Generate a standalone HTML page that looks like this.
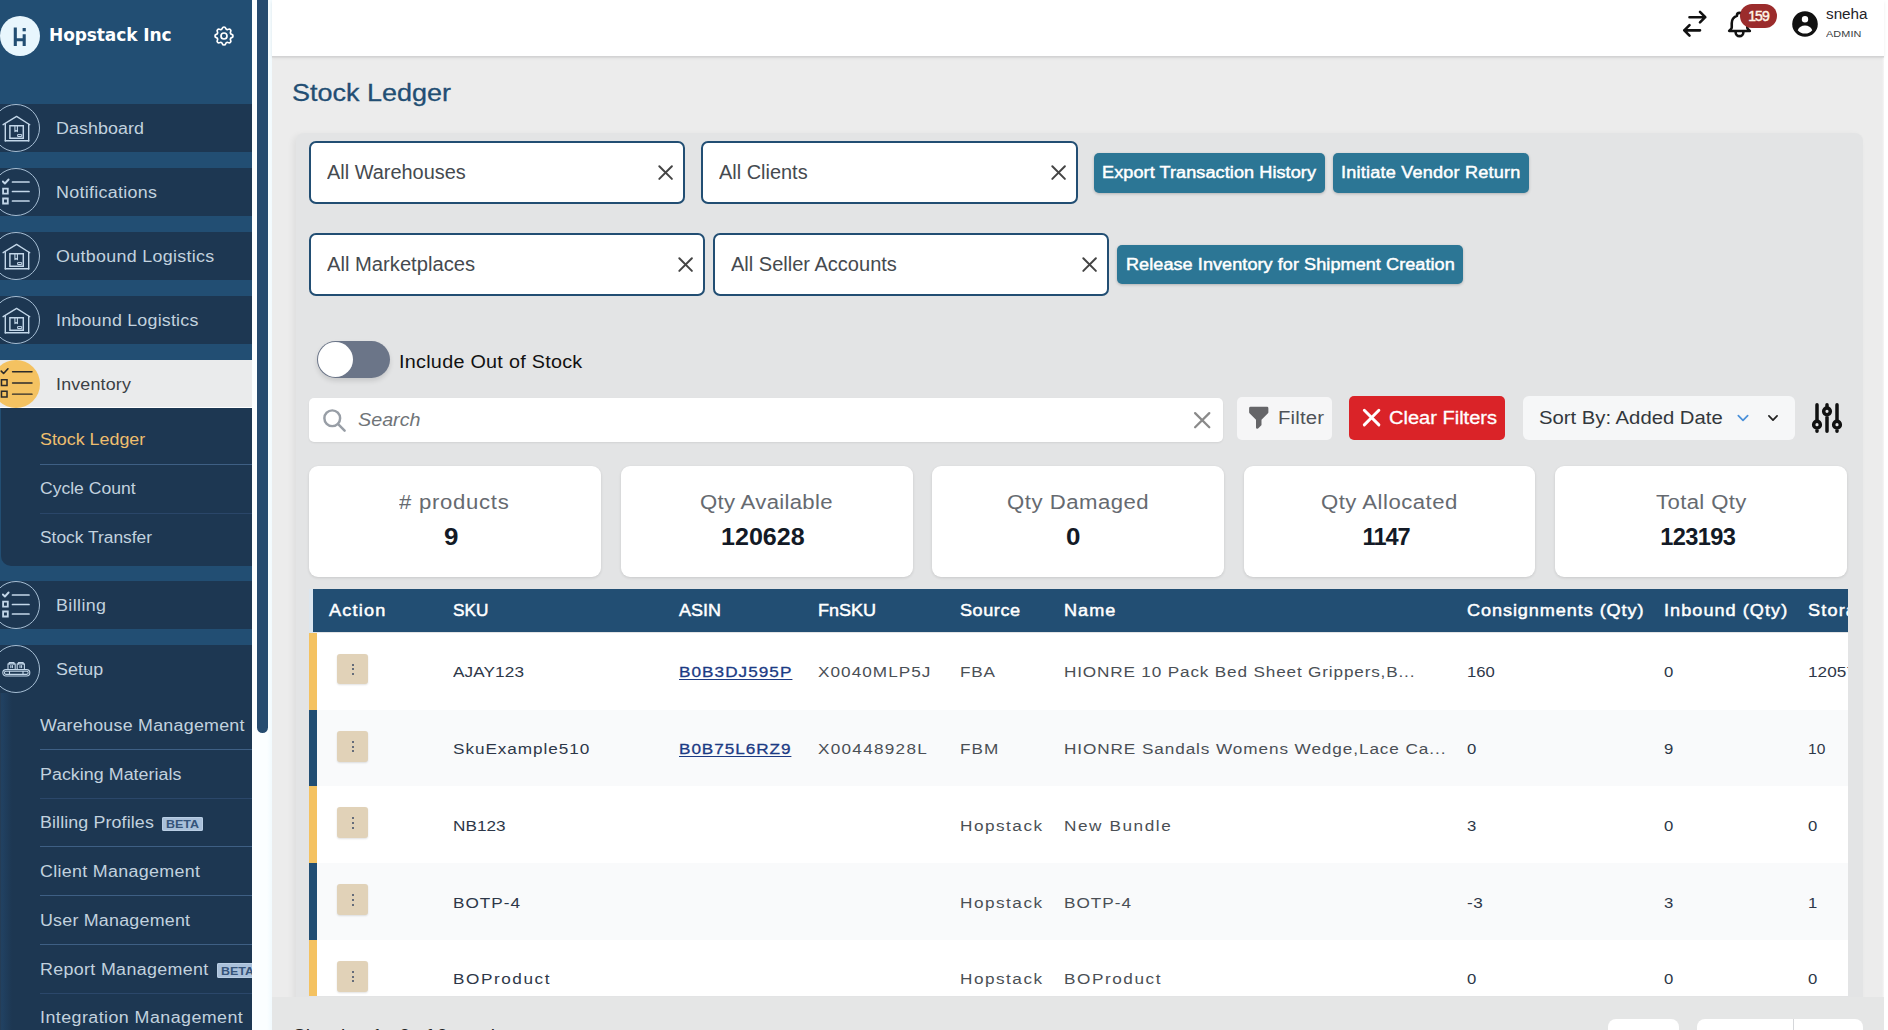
<!DOCTYPE html>
<html lang="en"><head><meta charset="utf-8"><title>Stock Ledger</title>
<style>
html,body{margin:0;padding:0;}
body{width:1888px;height:1030px;overflow:hidden;position:relative;background:#ECECED;font-family:'Liberation Sans', sans-serif;}
div,svg,nav,.t{position:absolute;}
.t{white-space:pre;display:block;transform-origin:0 50%;}
</style></head><body>
<nav style="left:0px;top:0px;width:252px;height:1030px;overflow:hidden;">
<div style="left:0px;top:0px;width:252px;height:1030px;background:#224E73;"></div>
<div style="left:0px;top:16px;width:40px;height:40px;background:#E8F6FD;border-radius:50%;"></div>
<svg style="left:13px;top:26.5px;" width="14" height="19.5" viewBox="0 0 14 19.5"><g fill="none" stroke="#224E73" stroke-width="3.1"><path d="M2.3 0.5V19M11.2 7.2V19M2.3 12.8H11.2"/></g><rect x="9.6" y="1" width="3.2" height="3.3" fill="#224E73"/></svg>
<span class="t" style="left:49.0px;top:27.2px;font-size:17px;line-height:17px;color:#fff;font-weight:700;font-family:'DejaVu Sans', 'Liberation Sans', sans-serif;letter-spacing:-0.10px;">Hopstack Inc</span>
<svg style="left:212px;top:24px;" width="24" height="24" viewBox="0 0 24 24"><g fill="none" stroke="#fff" stroke-width="1.7" stroke-linecap="round" stroke-linejoin="round"><path d="M10.325 4.317c.426-1.756 2.924-1.756 3.35 0a1.724 1.724 0 002.573 1.066c1.543-.94 3.31.826 2.37 2.37a1.724 1.724 0 001.065 2.572c1.756.426 1.756 2.924 0 3.35a1.724 1.724 0 00-1.066 2.573c.94 1.543-.826 3.31-2.37 2.37a1.724 1.724 0 00-2.572 1.065c-.426 1.756-2.924 1.756-3.35 0a1.724 1.724 0 00-2.573-1.066c-1.543.94-3.31-.826-2.37-2.37a1.724 1.724 0 00-1.065-2.572c-1.756-.426-1.756-2.924 0-3.35a1.724 1.724 0 001.066-2.573c-.94-1.543.826-3.31 2.37-2.37.996.608 2.296.07 2.572-1.065z"/><path d="M15 12a3 3 0 11-6 0 3 3 0 016 0z"/></g></svg>
<div style="left:0px;top:104px;width:252px;height:48px;background:#1D3752;"></div>
<div style="left:-8px;top:104px;width:48px;height:48px;border:1px solid #A6BED4;border-radius:50%;box-sizing:border-box;background:#1D3752;"></div>
<svg style="left:0px;top:114px;" width="33" height="30" viewBox="0 0 33 30"><g fill="none" stroke="#C3D7E9" stroke-linejoin="round" stroke-linecap="round"><path stroke-width="1.35" d="M3.1 10.7L16.6 2.4L29.8 10.7"/><path stroke-width="1.4" d="M5.3 10.2V27M28.7 10.2V27"/><path stroke-width="1.5" d="M5.3 26.7H28.7"/><path stroke-width="1.45" stroke-linejoin="miter" d="M9.9 11.8h13.4v12.5H9.9z"/><path stroke-width="1.1" d="M14.9 12.2v5.4l1.25-1 1.25 1v-5.4"/><path stroke-width="1" d="M18 20.6h3.7v1.9H18z"/></g></svg>
<span class="t" style="left:56.3px;top:120.6px;font-size:15.8px;line-height:15.8px;color:#C2D2DF;letter-spacing:0.07px;transform:scaleX(1.130);">Dashboard</span>
<div style="left:0px;top:168px;width:252px;height:48px;background:#1D3752;"></div>
<div style="left:-8px;top:168px;width:48px;height:48px;border:1px solid #A6BED4;border-radius:50%;box-sizing:border-box;background:#1D3752;"></div>
<svg style="left:1.4px;top:178.0px;" width="29" height="27" viewBox="0 0 29 27"><g fill="none" stroke="#C3D7E9" stroke-linecap="round" stroke-linejoin="round"><path stroke-width="1.90" d="M1.9 3.5l2 2 3.7-4"/><path stroke-width="1.80" stroke-linejoin="miter" d="M2.1 10.7h4.7v5h-4.7zM2.1 20.5h4.7v5h-4.7z"/><path stroke-width="1.70" d="M11.5 4h16.5M11.5 13.5h16.5M11.5 23h16.5"/></g></svg>
<span class="t" style="left:56.3px;top:184.6px;font-size:15.8px;line-height:15.8px;color:#C2D2DF;letter-spacing:0.28px;transform:scaleX(1.130);">Notifications</span>
<div style="left:0px;top:232px;width:252px;height:48px;background:#1D3752;"></div>
<div style="left:-8px;top:232px;width:48px;height:48px;border:1px solid #A6BED4;border-radius:50%;box-sizing:border-box;background:#1D3752;"></div>
<svg style="left:0px;top:242px;" width="33" height="30" viewBox="0 0 33 30"><g fill="none" stroke="#C3D7E9" stroke-linejoin="round" stroke-linecap="round"><path stroke-width="1.35" d="M3.1 10.7L16.6 2.4L29.8 10.7"/><path stroke-width="1.4" d="M5.3 10.2V27M28.7 10.2V27"/><path stroke-width="1.5" d="M5.3 26.7H28.7"/><path stroke-width="1.45" stroke-linejoin="miter" d="M9.9 11.8h13.4v12.5H9.9z"/><path stroke-width="1.1" d="M14.9 12.2v5.4l1.25-1 1.25 1v-5.4"/><path stroke-width="1" d="M18 20.6h3.7v1.9H18z"/></g></svg>
<span class="t" style="left:56.3px;top:248.6px;font-size:15.8px;line-height:15.8px;color:#C2D2DF;letter-spacing:0.28px;transform:scaleX(1.130);">Outbound Logistics</span>
<div style="left:0px;top:296px;width:252px;height:48px;background:#1D3752;"></div>
<div style="left:-8px;top:296px;width:48px;height:48px;border:1px solid #A6BED4;border-radius:50%;box-sizing:border-box;background:#1D3752;"></div>
<svg style="left:0px;top:306px;" width="33" height="30" viewBox="0 0 33 30"><g fill="none" stroke="#C3D7E9" stroke-linejoin="round" stroke-linecap="round"><path stroke-width="1.35" d="M3.1 10.7L16.6 2.4L29.8 10.7"/><path stroke-width="1.4" d="M5.3 10.2V27M28.7 10.2V27"/><path stroke-width="1.5" d="M5.3 26.7H28.7"/><path stroke-width="1.45" stroke-linejoin="miter" d="M9.9 11.8h13.4v12.5H9.9z"/><path stroke-width="1.1" d="M14.9 12.2v5.4l1.25-1 1.25 1v-5.4"/><path stroke-width="1" d="M18 20.6h3.7v1.9H18z"/></g></svg>
<span class="t" style="left:56.3px;top:312.6px;font-size:15.8px;line-height:15.8px;color:#C2D2DF;letter-spacing:0.19px;transform:scaleX(1.130);">Inbound Logistics</span>
<div style="left:0px;top:360px;width:252px;height:48px;background:#EAEBEC;box-shadow:inset 0 -1px 0 #fff;"></div>
<div style="left:-8px;top:360px;width:48px;height:48px;background:#F4C261;border-radius:50%;"></div>
<svg style="left:-1.4px;top:366.9px;" width="34.2" height="31.9" viewBox="0 0 29 27"><g fill="none" stroke="#2b2b2b" stroke-linecap="round" stroke-linejoin="round"><path stroke-width="1.37" d="M1.9 3.5l2 2 3.7-4"/><path stroke-width="1.30" stroke-linejoin="miter" d="M2.1 10.7h4.7v5h-4.7zM2.1 20.5h4.7v5h-4.7z"/><path stroke-width="1.22" d="M11.5 4h16.5M11.5 13.5h16.5M11.5 23h16.5"/></g></svg>
<span class="t" style="left:56.3px;top:376.6px;font-size:15.8px;line-height:15.8px;color:#3b3f45;letter-spacing:0.16px;transform:scaleX(1.130);">Inventory</span>
<div style="left:1px;top:408px;width:251px;height:157.5px;background:#1D3752;border-bottom-left-radius:10px;"></div>
<span class="t" style="left:40.2px;top:432.3px;font-size:15.8px;line-height:15.8px;color:#EDBE6E;transform:scaleX(1.130);">Stock Ledger</span>
<div style="left:40px;top:464px;width:212px;height:1px;background:#3E5F84;"></div>
<span class="t" style="left:40.2px;top:480.9px;font-size:15.8px;line-height:15.8px;color:#C2D2DF;transform:scaleX(1.111);">Cycle Count</span>
<div style="left:40px;top:513px;width:212px;height:1px;background:#2A4669;"></div>
<span class="t" style="left:40.2px;top:529.6px;font-size:15.8px;line-height:15.8px;color:#C2D2DF;transform:scaleX(1.100);">Stock Transfer</span>
<div style="left:0px;top:581px;width:252px;height:48px;background:#1D3752;"></div>
<div style="left:-8px;top:581px;width:48px;height:48px;border:1px solid #A6BED4;border-radius:50%;box-sizing:border-box;background:#1D3752;"></div>
<svg style="left:1.4px;top:591.0px;" width="29" height="27" viewBox="0 0 29 27"><g fill="none" stroke="#C3D7E9" stroke-linecap="round" stroke-linejoin="round"><path stroke-width="1.90" d="M1.9 3.5l2 2 3.7-4"/><path stroke-width="1.80" stroke-linejoin="miter" d="M2.1 10.7h4.7v5h-4.7zM2.1 20.5h4.7v5h-4.7z"/><path stroke-width="1.70" d="M11.5 4h16.5M11.5 13.5h16.5M11.5 23h16.5"/></g></svg>
<span class="t" style="left:56.3px;top:597.6px;font-size:15.8px;line-height:15.8px;color:#C2D2DF;letter-spacing:0.35px;transform:scaleX(1.130);">Billing</span>
<div style="left:0px;top:645px;width:252px;height:400px;background:#1D3752;"></div>
<div style="left:-8px;top:645px;width:48px;height:48px;border:1px solid #A6BED4;border-radius:50%;box-sizing:border-box;background:#1D3752;"></div>
<svg style="left:1.5px;top:660.4px;" width="29" height="17" viewBox="0 0 29 17"><g fill="none" stroke="#C3D7E9" stroke-width="1.1" stroke-linejoin="round" stroke-linecap="round"><rect x="0.8" y="9.6" width="27" height="6.4" rx="3.2"/><rect x="2.4" y="11.2" width="23.8" height="3.2" rx="1.6"/><path d="M7.5 11.2v3.2M21 11.2v3.2"/><path d="M6 9.4V3.9h7.2v5.5M15.2 9.4V3.9h7.2v5.5"/><path d="M7.2 3.9V2.6h4.8V3.9M16.4 3.9V2.6h4.8V3.9"/><path d="M8.8 5.6v2M10.4 5.6v2M18 5.6v2M19.6 5.6v2"/></g></svg>
<span class="t" style="left:56.3px;top:661.6px;font-size:15.8px;line-height:15.8px;color:#C2D2DF;letter-spacing:0.11px;transform:scaleX(1.130);">Setup</span>
<div style="left:0px;top:693px;width:12px;height:340px;background:linear-gradient(90deg,rgba(40,60,82,.9) 0,rgba(36,74,112,.55) 14%,rgba(36,74,112,0) 100%);"></div>
<span class="t" style="left:40.3px;top:717.9px;font-size:15.8px;line-height:15.8px;color:#C2D2DF;letter-spacing:0.22px;transform:scaleX(1.130);">Warehouse Management</span>
<div style="left:40px;top:749.0px;width:212px;height:1px;background:#3E5F84;"></div>
<span class="t" style="left:40.3px;top:766.6px;font-size:15.8px;line-height:15.8px;color:#C2D2DF;letter-spacing:0.03px;transform:scaleX(1.130);">Packing Materials</span>
<div style="left:40px;top:797.73px;width:212px;height:1px;background:#2B476A;"></div>
<span class="t" style="left:40.3px;top:815.3px;font-size:15.8px;line-height:15.8px;color:#C2D2DF;letter-spacing:0.10px;transform:scaleX(1.130);">Billing Profiles</span>
<div style="left:40px;top:846.46px;width:212px;height:1px;background:#3E5F84;"></div>
<span class="t" style="left:40.3px;top:864.1px;font-size:15.8px;line-height:15.8px;color:#C2D2DF;letter-spacing:0.28px;transform:scaleX(1.130);">Client Management</span>
<div style="left:40px;top:895.19px;width:212px;height:1px;background:#3E5F84;"></div>
<span class="t" style="left:40.3px;top:912.8px;font-size:15.8px;line-height:15.8px;color:#C2D2DF;letter-spacing:0.20px;transform:scaleX(1.130);">User Management</span>
<div style="left:40px;top:943.92px;width:212px;height:1px;background:#3E5F84;"></div>
<span class="t" style="left:40.3px;top:961.5px;font-size:15.8px;line-height:15.8px;color:#C2D2DF;letter-spacing:0.30px;transform:scaleX(1.130);">Report Management</span>
<div style="left:40px;top:992.65px;width:212px;height:1px;background:#2B476A;"></div>
<span class="t" style="left:40.3px;top:1010.3px;font-size:15.8px;line-height:15.8px;color:#C2D2DF;letter-spacing:0.39px;transform:scaleX(1.130);">Integration Management</span>
<div style="left:161.7px;top:816.8000000000001px;width:41.6px;height:14.6px;background:#A9C0DA;border-radius:2px;overflow:hidden;box-shadow:inset 0 0 0 1px #B9CEE4;">
<span class="t" style="left:4.6px;top:1.5px;font-size:11.6px;line-height:11.6px;color:#35547A;font-weight:700;transform:scaleX(1.075);">BETA</span></div>
<div style="left:216.8px;top:963.2px;width:41.6px;height:14.6px;background:#A9C0DA;border-radius:2px;overflow:hidden;box-shadow:inset 0 0 0 1px #B9CEE4;">
<span class="t" style="left:4.6px;top:1.5px;font-size:11.6px;line-height:11.6px;color:#35547A;font-weight:700;transform:scaleX(1.075);">BETA</span></div></nav>
<main>
<div style="left:252px;top:0px;width:20px;height:1030px;background:linear-gradient(90deg,#FBFEFF 0,#FBFEFF 75%,#F1FAFE 100%);"></div>
<div style="left:257px;top:-10px;width:11px;height:742.5px;background:#264B6F;border-radius:6px;"></div>
<div style="left:272px;top:0px;width:1612px;height:1030px;background:linear-gradient(90deg,#ECECEC 0,#ECECEC 1610px,#F6F6F6 1612px);"></div>
<div style="left:1884px;top:0px;width:4px;height:1030px;background:#fff;"></div>
<div style="left:272px;top:0px;width:1612px;height:56px;background:#fff;box-shadow:0 1.5px 0 #D3D3D4,0 2px 3px rgba(0,0,0,.08);"></div>
<svg style="left:1679.2px;top:7.8px;" width="31.5" height="31.5" viewBox="0 0 24 24"><path fill="none" stroke="#111" stroke-width="2" stroke-linecap="round" stroke-linejoin="round" d="M8 7h12m0 0l-4-4m4 4l-4 4m0 6H4m0 0l4 4m-4-4l4-4"/></svg>
<svg style="left:1723.5px;top:9px;" width="31" height="31" viewBox="0 0 24 24"><path fill="none" stroke="#111" stroke-width="2" stroke-linecap="round" stroke-linejoin="round" d="M15 17h5l-1.405-1.405A2.032 2.032 0 0118 14.158V11a6.002 6.002 0 00-4-5.659V5a2 2 0 10-4 0v.341C7.67 6.165 6 8.388 6 11v3.159c0 .538-.214 1.055-.595 1.436L4 17h5m6 0v1a3 3 0 11-6 0v-1m6 0H9"/></svg>
<div style="left:1740px;top:4px;width:37px;height:23.5px;background:#9B2C2C;border-radius:12px;">
<span class="t" style="left:8.2px;top:4.8px;font-size:14px;line-height:14px;color:#FFF6E8;-webkit-text-stroke:0.45px #FFF6E8;letter-spacing:-0.94px;">159</span></div>
<svg style="left:1789.4px;top:8px;" width="32" height="32" viewBox="0 0 20 20"><path fill="#111" fill-rule="evenodd" d="M18 10a8 8 0 11-16 0 8 8 0 0116 0zm-6-3a2 2 0 11-4 0 2 2 0 014 0zm-2 4a5 5 0 00-4.546 2.916A5.986 5.986 0 0010 16a5.986 5.986 0 004.546-2.084A5 5 0 0010 11z" clip-rule="evenodd"/></svg>
<span class="t" style="left:1825.6px;top:6.9px;font-size:14px;line-height:14px;color:#1f2329;transform:scaleX(1.090);">sneha</span>
<span class="t" style="left:1825.8px;top:29.2px;font-size:9.6px;line-height:9.6px;color:#3a3d42;letter-spacing:0.09px;transform:scaleX(1.130);">ADMIN</span>
<span class="t" style="left:292.2px;top:80.6px;font-size:24.6px;line-height:24.6px;color:#224E73;-webkit-text-stroke:0.3px #224E73;transform:scaleX(1.097);">Stock Ledger</span>
<div style="left:296px;top:132.5px;width:1567px;height:900px;background:#E3E4E5;border-radius:8px;box-shadow:-3px 2px 6px rgba(0,0,0,.06);"></div>
<div style="left:309px;top:141px;width:376px;height:63px;background:#fff;border:2px solid #224E73;border-radius:7px;box-sizing:border-box;"></div>
<span class="t" style="left:326.6px;top:162.9px;font-size:19.5px;line-height:19.5px;color:#454A4F;transform:scaleX(1.021);">All Warehouses</span>
<svg style="left:652.6px;top:160.0px;" width="25.2" height="25.2" viewBox="0 0 24 24"><path fill="none" stroke="#444" stroke-width="1.9" stroke-linecap="round" d="M6 18L18 6M6 6l12 12"/></svg>
<div style="left:701px;top:141px;width:377px;height:63px;background:#fff;border:2px solid #224E73;border-radius:7px;box-sizing:border-box;"></div>
<span class="t" style="left:718.6px;top:162.9px;font-size:19.5px;line-height:19.5px;color:#454A4F;transform:scaleX(1.022);">All Clients</span>
<svg style="left:1045.6000000000001px;top:160.0px;" width="25.2" height="25.2" viewBox="0 0 24 24"><path fill="none" stroke="#444" stroke-width="1.9" stroke-linecap="round" d="M6 18L18 6M6 6l12 12"/></svg>
<div style="left:309px;top:233px;width:396px;height:63px;background:#fff;border:2px solid #224E73;border-radius:7px;box-sizing:border-box;"></div>
<span class="t" style="left:326.6px;top:254.9px;font-size:19.5px;line-height:19.5px;color:#454A4F;transform:scaleX(1.035);">All Marketplaces</span>
<svg style="left:672.6999999999999px;top:252.00000000000003px;" width="25.2" height="25.2" viewBox="0 0 24 24"><path fill="none" stroke="#444" stroke-width="1.9" stroke-linecap="round" d="M6 18L18 6M6 6l12 12"/></svg>
<div style="left:713px;top:233px;width:396px;height:63px;background:#fff;border:2px solid #224E73;border-radius:7px;box-sizing:border-box;"></div>
<span class="t" style="left:730.6px;top:254.9px;font-size:19.5px;line-height:19.5px;color:#454A4F;transform:scaleX(1.027);">All Seller Accounts</span>
<svg style="left:1076.6000000000001px;top:252.00000000000003px;" width="25.2" height="25.2" viewBox="0 0 24 24"><path fill="none" stroke="#444" stroke-width="1.9" stroke-linecap="round" d="M6 18L18 6M6 6l12 12"/></svg>
<div style="left:1094px;top:153px;width:231px;height:39.5px;background:#2C7695;border-radius:5px;box-shadow:0 1px 3px rgba(0,0,0,.22);"></div>
<span class="t" style="left:1102.4px;top:164.8px;font-size:16px;line-height:16px;color:#fff;-webkit-text-stroke:0.45px #fff;letter-spacing:0.07px;transform:scaleX(1.130);">Export Transaction History</span>
<div style="left:1333px;top:153px;width:196.3px;height:39.5px;background:#2C7695;border-radius:5px;box-shadow:0 1px 3px rgba(0,0,0,.22);"></div>
<span class="t" style="left:1341.2px;top:164.8px;font-size:16px;line-height:16px;color:#fff;-webkit-text-stroke:0.45px #fff;letter-spacing:0.19px;transform:scaleX(1.130);">Initiate Vendor Return</span>
<div style="left:1117px;top:244.8px;width:346px;height:39.7px;background:#2C7695;border-radius:5px;box-shadow:0 1px 3px rgba(0,0,0,.22);"></div>
<span class="t" style="left:1125.7px;top:256.7px;font-size:16px;line-height:16px;color:#fff;-webkit-text-stroke:0.45px #fff;letter-spacing:0.05px;transform:scaleX(1.130);">Release Inventory for Shipment Creation</span>
<div style="left:316.5px;top:341px;width:73.5px;height:37.3px;background:#6B7588;border-radius:19px;box-shadow:0 3px 5px rgba(0,0,0,.12);"></div>
<div style="left:317.8px;top:342.2px;width:35px;height:35px;background:#fff;border-radius:50%;"></div>
<span class="t" style="left:399.2px;top:354.0px;font-size:17.5px;line-height:17.5px;color:#111;letter-spacing:0.24px;transform:scaleX(1.130);">Include Out of Stock</span>
<div style="left:309px;top:398px;width:913.5px;height:44px;background:#fff;border-radius:5px;box-shadow:0 1px 2px rgba(0,0,0,.08);"></div>
<svg style="left:321px;top:407px;" width="27" height="27" viewBox="0 0 24 24"><path fill="none" stroke="#989EA6" stroke-width="2.2" stroke-linecap="round" stroke-linejoin="round" d="M21 21l-6-6m2-5a7 7 0 11-14 0 7 7 0 0114 0z"/></svg>
<span class="t" style="left:357.5px;top:411.2px;font-size:18px;line-height:18px;color:#707478;font-style:italic;transform:scaleX(1.096);">Search</span>
<svg style="left:1187.8px;top:405.5px;" width="28.399999999999995" height="28.399999999999995" viewBox="0 0 24 24"><path fill="none" stroke="#8a8a8a" stroke-width="1.9" stroke-linecap="round" d="M6 18L18 6M6 6l12 12"/></svg>
<div style="left:1236.7px;top:396.5px;width:95px;height:43.3px;background:#F6F6F7;border-radius:5px;"></div>
<svg style="left:1245px;top:404.3px;" width="27.5" height="27.5" viewBox="0 0 20 20"><path fill="#656568" fill-rule="evenodd" d="M3 3a1 1 0 011-1h12a1 1 0 011 1v3a1 1 0 01-.293.707L12 11.414V15a1 1 0 01-.293.707l-2 2A1 1 0 018 17v-5.586L3.293 6.707A1 1 0 013 6V3z" clip-rule="evenodd"/></svg>
<span class="t" style="left:1278.0px;top:409.2px;font-size:18px;line-height:18px;color:#4E5257;letter-spacing:0.13px;transform:scaleX(1.130);">Filter</span>
<div style="left:1349.3px;top:396px;width:155.8px;height:43.8px;background:#DA2328;border-radius:5px;"></div>
<svg style="left:1356.6000000000001px;top:403.29999999999995px;" width="29.2" height="29.2" viewBox="0 0 24 24"><path fill="none" stroke="#fff" stroke-width="2.4" stroke-linecap="round" d="M6 18L18 6M6 6l12 12"/></svg>
<span class="t" style="left:1389.4px;top:409.2px;font-size:18px;line-height:18px;color:#fff;-webkit-text-stroke:0.3px #fff;transform:scaleX(1.113);">Clear Filters</span>
<div style="left:1522.7px;top:396.3px;width:272px;height:43.3px;background:#F6F7F8;border-radius:6px;"></div>
<span class="t" style="left:1538.6px;top:409.2px;font-size:18px;line-height:18px;color:#33373C;transform:scaleX(1.126);">Sort By: Added Date</span>
<svg style="left:1734.9px;top:410px;" width="16" height="16" viewBox="0 0 24 24"><path fill="none" stroke="#4A90D9" stroke-width="2.6" stroke-linecap="round" stroke-linejoin="round" d="M5 8.5l7 7 7-7"/></svg>
<svg style="left:1765.5px;top:411px;" width="14" height="14" viewBox="0 0 24 24"><path fill="none" stroke="#222" stroke-width="3" stroke-linecap="round" stroke-linejoin="round" d="M5 8.5l7 7 7-7"/></svg>
<svg style="left:1807.3px;top:398.2px;" width="40" height="40" viewBox="0 0 24 24"><path fill="none" stroke="#111" stroke-width="2.1" stroke-linecap="round" stroke-linejoin="round" d="M12 6V4m0 2a2 2 0 100 4m0-4a2 2 0 110 4m-6 8a2 2 0 100-4m0 4a2 2 0 110-4m0 4v2m0-6V4m6 6v10m6-2a2 2 0 100-4m0 4a2 2 0 110-4m0 4v2m0-6V4"/></svg>
<div style="left:309.2px;top:465.7px;width:292px;height:111px;background:#fff;border-radius:9px;box-shadow:0 1px 3px rgba(0,0,0,.12);"></div>
<span class="t" style="left:399.4px;top:493.0px;font-size:19.6px;line-height:19.6px;color:#666A70;letter-spacing:0.63px;transform:scaleX(1.130);"># products</span>
<span class="t" style="left:443.8px;top:526.3px;font-size:23.6px;line-height:23.6px;color:#131A26;font-weight:700;transform:scaleX(1.100);">9</span>
<div style="left:621px;top:465.7px;width:291.5px;height:111px;background:#fff;border-radius:9px;box-shadow:0 1px 3px rgba(0,0,0,.12);"></div>
<span class="t" style="left:700.0px;top:493.0px;font-size:19.6px;line-height:19.6px;color:#666A70;letter-spacing:0.27px;transform:scaleX(1.130);">Qty Available</span>
<span class="t" style="left:721.0px;top:526.3px;font-size:23.6px;line-height:23.6px;color:#131A26;font-weight:700;transform:scaleX(1.063);">120628</span>
<div style="left:932.4px;top:465.7px;width:292px;height:111px;background:#fff;border-radius:9px;box-shadow:0 1px 3px rgba(0,0,0,.12);"></div>
<span class="t" style="left:1006.7px;top:493.0px;font-size:19.6px;line-height:19.6px;color:#666A70;letter-spacing:0.45px;transform:scaleX(1.130);">Qty Damaged</span>
<span class="t" style="left:1066.4px;top:526.3px;font-size:23.6px;line-height:23.6px;color:#131A26;font-weight:700;transform:scaleX(1.100);">0</span>
<div style="left:1243.8px;top:465.7px;width:291px;height:111px;background:#fff;border-radius:9px;box-shadow:0 1px 3px rgba(0,0,0,.12);"></div>
<span class="t" style="left:1321.2px;top:493.0px;font-size:19.6px;line-height:19.6px;color:#666A70;letter-spacing:0.43px;transform:scaleX(1.130);">Qty Allocated</span>
<span class="t" style="left:1362.6px;top:526.3px;font-size:23.6px;line-height:23.6px;color:#131A26;font-weight:700;letter-spacing:-1.02px;">1147</span>
<div style="left:1555px;top:465.7px;width:292px;height:111px;background:#fff;border-radius:9px;box-shadow:0 1px 3px rgba(0,0,0,.12);"></div>
<span class="t" style="left:1656.2px;top:493.0px;font-size:19.6px;line-height:19.6px;color:#666A70;letter-spacing:0.33px;transform:scaleX(1.130);">Total Qty</span>
<span class="t" style="left:1660.3px;top:526.3px;font-size:23.6px;line-height:23.6px;color:#131A26;font-weight:700;letter-spacing:-0.61px;">123193</span>
<div style="left:308.5px;top:588.7px;width:5px;height:44px;background:#DCE6EF;"></div>
<div style="left:309px;top:588.7px;width:1538.5px;height:407.5px;">
<div style="left:-0.5px;top:0px;width:1539px;height:407.5px;overflow:hidden;">
<div style="left:0.5px;top:0px;width:1538.5px;height:407.5px;">
<div style="left:4px;top:0px;width:1534.5px;height:43.8px;background:#224E73;"></div>
<span class="t" style="left:19.7px;top:14.4px;font-size:16px;line-height:16px;color:#fff;-webkit-text-stroke:0.45px #fff;letter-spacing:1.09px;transform:scaleX(1.130);">Action</span>
<span class="t" style="left:143.8px;top:14.4px;font-size:16px;line-height:16px;color:#fff;-webkit-text-stroke:0.45px #fff;transform:scaleX(1.073);">SKU</span>
<span class="t" style="left:370.4px;top:14.4px;font-size:16px;line-height:16px;color:#fff;-webkit-text-stroke:0.45px #fff;transform:scaleX(1.122);">ASIN</span>
<span class="t" style="left:509.2px;top:14.4px;font-size:16px;line-height:16px;color:#fff;-webkit-text-stroke:0.45px #fff;transform:scaleX(1.125);">FnSKU</span>
<span class="t" style="left:651.0px;top:14.4px;font-size:16px;line-height:16px;color:#fff;-webkit-text-stroke:0.45px #fff;letter-spacing:0.50px;transform:scaleX(1.130);">Source</span>
<span class="t" style="left:755.0px;top:14.4px;font-size:16px;line-height:16px;color:#fff;-webkit-text-stroke:0.45px #fff;letter-spacing:0.93px;transform:scaleX(1.130);">Name</span>
<span class="t" style="left:1157.5px;top:14.4px;font-size:16px;line-height:16px;color:#fff;-webkit-text-stroke:0.45px #fff;letter-spacing:0.82px;transform:scaleX(1.130);">Consignments (Qty)</span>
<span class="t" style="left:1355.0px;top:14.4px;font-size:16px;line-height:16px;color:#fff;-webkit-text-stroke:0.45px #fff;letter-spacing:0.93px;transform:scaleX(1.130);">Inbound (Qty)</span>
<span class="t" style="left:1498.7px;top:14.4px;font-size:16px;line-height:16px;color:#fff;-webkit-text-stroke:0.45px #fff;letter-spacing:1.03px;transform:scaleX(1.130);">Storage (Qty)</span>
<div style="left:0px;top:44.0px;width:1538.5px;height:77.59999999999995px;background:#fff;"></div>
<div style="left:-0.5px;top:44.0px;width:8px;height:77.59999999999995px;background:#F4C261;"></div>
<div style="left:28.2px;top:64.9px;width:30.8px;height:30.8px;background:#E1D2B8;border-radius:3px;box-shadow:0 1px 2px rgba(0,0,0,.12);">
<div style="left:14.4px;top:10.0px;width:2px;height:2px;background:#3D4B66;border-radius:50%;"></div>
<div style="left:14.4px;top:14.7px;width:2px;height:2px;background:#3D4B66;border-radius:50%;"></div>
<div style="left:14.4px;top:19.4px;width:2px;height:2px;background:#3D4B66;border-radius:50%;"></div></div>
<span class="t" style="left:143.8px;top:75.6px;font-size:15.2px;line-height:15.2px;color:#2D3748;letter-spacing:0.10px;transform:scaleX(1.130);">AJAY123</span>
<span class="t" style="left:370.4px;top:75.6px;font-size:15.2px;line-height:15.2px;color:#1C3B84;-webkit-text-stroke:0.3px #1C3B84;letter-spacing:0.92px;transform:scaleX(1.130);text-decoration:underline;text-underline-offset:2px;text-decoration-thickness:1.3px;">B0B3DJ595P</span>
<span class="t" style="left:509.2px;top:75.6px;font-size:15.2px;line-height:15.2px;color:#4A4F55;letter-spacing:0.92px;transform:scaleX(1.130);">X0040MLP5J</span>
<span class="t" style="left:651.0px;top:75.6px;font-size:15.2px;line-height:15.2px;color:#4A4F55;letter-spacing:0.68px;transform:scaleX(1.130);">FBA</span>
<span class="t" style="left:755.0px;top:75.6px;font-size:15.2px;line-height:15.2px;color:#4A4F55;letter-spacing:0.74px;transform:scaleX(1.130);">HIONRE 10 Pack Bed Sheet Grippers,B...</span>
<span class="t" style="left:1157.5px;top:75.6px;font-size:15.2px;line-height:15.2px;color:#2D3748;transform:scaleX(1.097);">160</span>
<span class="t" style="left:1355.0px;top:75.6px;font-size:15.2px;line-height:15.2px;color:#2D3748;transform:scaleX(1.100);">0</span>
<span class="t" style="left:1498.7px;top:75.6px;font-size:15.2px;line-height:15.2px;color:#2D3748;letter-spacing:0.05px;transform:scaleX(1.130);">12057</span>
<div style="left:0px;top:121.29999999999995px;width:1538.5px;height:76.69999999999997px;background:#F9FAFB;"></div>
<div style="left:-0.5px;top:121.29999999999995px;width:8px;height:76.69999999999997px;background:#224E73;"></div>
<div style="left:28.2px;top:142.19999999999996px;width:30.8px;height:30.8px;background:#E1D2B8;border-radius:3px;box-shadow:0 1px 2px rgba(0,0,0,.12);">
<div style="left:14.4px;top:10.0px;width:2px;height:2px;background:#3D4B66;border-radius:50%;"></div>
<div style="left:14.4px;top:14.7px;width:2px;height:2px;background:#3D4B66;border-radius:50%;"></div>
<div style="left:14.4px;top:19.4px;width:2px;height:2px;background:#3D4B66;border-radius:50%;"></div></div>
<span class="t" style="left:143.8px;top:152.5px;font-size:15.2px;line-height:15.2px;color:#2D3748;letter-spacing:0.83px;transform:scaleX(1.130);">SkuExample510</span>
<span class="t" style="left:370.4px;top:152.5px;font-size:15.2px;line-height:15.2px;color:#1C3B84;-webkit-text-stroke:0.3px #1C3B84;letter-spacing:0.83px;transform:scaleX(1.130);text-decoration:underline;text-underline-offset:2px;text-decoration-thickness:1.3px;">B0B75L6RZ9</span>
<span class="t" style="left:509.2px;top:152.5px;font-size:15.2px;line-height:15.2px;color:#4A4F55;letter-spacing:1.12px;transform:scaleX(1.130);">X00448928L</span>
<span class="t" style="left:651.0px;top:152.5px;font-size:15.2px;line-height:15.2px;color:#4A4F55;letter-spacing:0.91px;transform:scaleX(1.130);">FBM</span>
<span class="t" style="left:755.0px;top:152.5px;font-size:15.2px;line-height:15.2px;color:#4A4F55;letter-spacing:0.81px;transform:scaleX(1.130);">HIONRE Sandals Womens Wedge,Lace Ca...</span>
<span class="t" style="left:1157.5px;top:152.5px;font-size:15.2px;line-height:15.2px;color:#2D3748;transform:scaleX(1.100);">0</span>
<span class="t" style="left:1355.0px;top:152.5px;font-size:15.2px;line-height:15.2px;color:#2D3748;transform:scaleX(1.100);">9</span>
<span class="t" style="left:1498.7px;top:152.5px;font-size:15.2px;line-height:15.2px;color:#2D3748;transform:scaleX(1.023);">10</span>
<div style="left:0px;top:197.69999999999993px;width:1538.5px;height:77.3px;background:#fff;"></div>
<div style="left:-0.5px;top:197.69999999999993px;width:8px;height:77.3px;background:#F4C261;"></div>
<div style="left:28.2px;top:218.59999999999994px;width:30.8px;height:30.8px;background:#E1D2B8;border-radius:3px;box-shadow:0 1px 2px rgba(0,0,0,.12);">
<div style="left:14.4px;top:10.0px;width:2px;height:2px;background:#3D4B66;border-radius:50%;"></div>
<div style="left:14.4px;top:14.7px;width:2px;height:2px;background:#3D4B66;border-radius:50%;"></div>
<div style="left:14.4px;top:19.4px;width:2px;height:2px;background:#3D4B66;border-radius:50%;"></div></div>
<span class="t" style="left:143.8px;top:229.3px;font-size:15.2px;line-height:15.2px;color:#2D3748;letter-spacing:0.04px;transform:scaleX(1.130);">NB123</span>
<span class="t" style="left:651.0px;top:229.3px;font-size:15.2px;line-height:15.2px;color:#4A4F55;letter-spacing:1.33px;transform:scaleX(1.130);">Hopstack</span>
<span class="t" style="left:755.0px;top:229.3px;font-size:15.2px;line-height:15.2px;color:#4A4F55;letter-spacing:1.39px;transform:scaleX(1.130);">New Bundle</span>
<span class="t" style="left:1157.5px;top:229.3px;font-size:15.2px;line-height:15.2px;color:#2D3748;transform:scaleX(1.100);">3</span>
<span class="t" style="left:1355.0px;top:229.3px;font-size:15.2px;line-height:15.2px;color:#2D3748;transform:scaleX(1.100);">0</span>
<span class="t" style="left:1498.7px;top:229.3px;font-size:15.2px;line-height:15.2px;color:#2D3748;transform:scaleX(1.100);">0</span>
<div style="left:0px;top:274.69999999999993px;width:1538.5px;height:76.90000000000002px;background:#F9FAFB;"></div>
<div style="left:-0.5px;top:274.69999999999993px;width:8px;height:76.90000000000002px;background:#224E73;"></div>
<div style="left:28.2px;top:295.5999999999999px;width:30.8px;height:30.8px;background:#E1D2B8;border-radius:3px;box-shadow:0 1px 2px rgba(0,0,0,.12);">
<div style="left:14.4px;top:10.0px;width:2px;height:2px;background:#3D4B66;border-radius:50%;"></div>
<div style="left:14.4px;top:14.7px;width:2px;height:2px;background:#3D4B66;border-radius:50%;"></div>
<div style="left:14.4px;top:19.4px;width:2px;height:2px;background:#3D4B66;border-radius:50%;"></div></div>
<span class="t" style="left:143.8px;top:306.0px;font-size:15.2px;line-height:15.2px;color:#2D3748;letter-spacing:0.89px;transform:scaleX(1.130);">BOTP-4</span>
<span class="t" style="left:651.0px;top:306.0px;font-size:15.2px;line-height:15.2px;color:#4A4F55;letter-spacing:1.33px;transform:scaleX(1.130);">Hopstack</span>
<span class="t" style="left:755.0px;top:306.0px;font-size:15.2px;line-height:15.2px;color:#4A4F55;letter-spacing:0.89px;transform:scaleX(1.130);">BOTP-4</span>
<span class="t" style="left:1157.5px;top:306.0px;font-size:15.2px;line-height:15.2px;color:#2D3748;letter-spacing:0.43px;transform:scaleX(1.130);">-3</span>
<span class="t" style="left:1355.0px;top:306.0px;font-size:15.2px;line-height:15.2px;color:#2D3748;transform:scaleX(1.100);">3</span>
<span class="t" style="left:1498.7px;top:306.0px;font-size:15.2px;line-height:15.2px;color:#2D3748;transform:scaleX(1.100);">1</span>
<div style="left:0px;top:351.29999999999995px;width:1538.5px;height:77.3px;background:#fff;"></div>
<div style="left:-0.5px;top:351.29999999999995px;width:8px;height:77.3px;background:#F4C261;"></div>
<div style="left:28.2px;top:372.19999999999993px;width:30.8px;height:30.8px;background:#E1D2B8;border-radius:3px;box-shadow:0 1px 2px rgba(0,0,0,.12);">
<div style="left:14.4px;top:10.0px;width:2px;height:2px;background:#3D4B66;border-radius:50%;"></div>
<div style="left:14.4px;top:14.7px;width:2px;height:2px;background:#3D4B66;border-radius:50%;"></div>
<div style="left:14.4px;top:19.4px;width:2px;height:2px;background:#3D4B66;border-radius:50%;"></div></div>
<span class="t" style="left:143.8px;top:382.7px;font-size:15.2px;line-height:15.2px;color:#2D3748;letter-spacing:1.38px;transform:scaleX(1.130);">BOProduct</span>
<span class="t" style="left:651.0px;top:382.7px;font-size:15.2px;line-height:15.2px;color:#4A4F55;letter-spacing:1.33px;transform:scaleX(1.130);">Hopstack</span>
<span class="t" style="left:755.0px;top:382.7px;font-size:15.2px;line-height:15.2px;color:#4A4F55;letter-spacing:1.38px;transform:scaleX(1.130);">BOProduct</span>
<span class="t" style="left:1157.5px;top:382.7px;font-size:15.2px;line-height:15.2px;color:#2D3748;transform:scaleX(1.100);">0</span>
<span class="t" style="left:1355.0px;top:382.7px;font-size:15.2px;line-height:15.2px;color:#2D3748;transform:scaleX(1.100);">0</span>
<span class="t" style="left:1498.7px;top:382.7px;font-size:15.2px;line-height:15.2px;color:#2D3748;transform:scaleX(1.100);">0</span></div></div></div>
<div style="left:272px;top:997px;width:1612px;height:40px;background:#E5E6E6;"></div>
<span class="t" style="left:292.5px;top:1026.9px;font-size:18px;line-height:18px;color:#222;transform:scaleX(1.068);">Showing 1 - 9 of 9 results</span>
<div style="left:1608px;top:1019px;width:71px;height:30px;background:#fff;border-radius:8px;"></div>
<div style="left:1697px;top:1019px;width:166px;height:30px;background:#fff;border-radius:8px;"></div>
<div style="left:1793px;top:1019px;width:1px;height:30px;background:#D5D7DA;"></div>
</main>
</body></html>
